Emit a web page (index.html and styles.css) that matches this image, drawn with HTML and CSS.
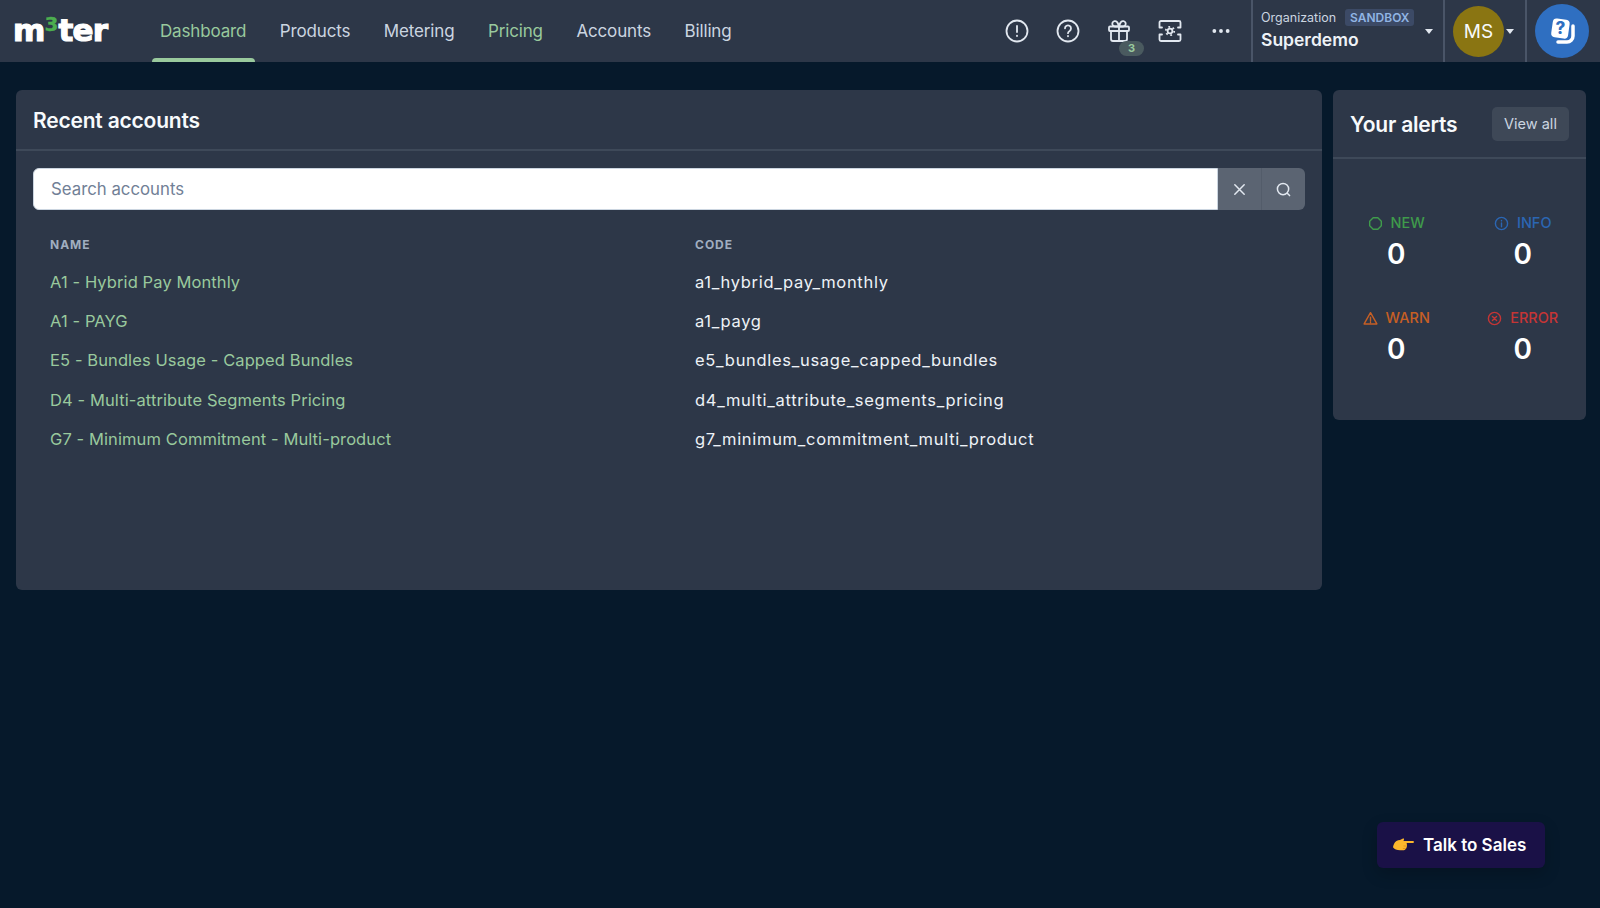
FILE: index.html
```html
<!DOCTYPE html>
<html lang="en">
<head>
<meta charset="utf-8">
<title>m3ter Dashboard</title>
<link rel="stylesheet" href="styles.css">
</head>
<body>
<header class="topbar">
  <div class="logo">m<span class="logo-three">3</span>ter</div>
  <nav class="nav">
    <a class="nav-item is-active">Dashboard</a>
    <a class="nav-item">Products</a>
    <a class="nav-item">Metering</a>
    <a class="nav-item is-green">Pricing</a>
    <a class="nav-item">Accounts</a>
    <a class="nav-item">Billing</a>
  </nav>
  <div class="tools">
    <button class="tool"><svg viewBox="0 0 24 24" class="tool-icon"><circle cx="12" cy="12" r="10.5"/><path d="M12 7v6M12 16.600v.4"/></svg></button>
    <button class="tool"><svg viewBox="0 0 24 24" class="tool-icon"><circle cx="12" cy="12" r="10.5"/><path d="M9 9.300a3 3 0 1 1 4.600 2.600c-1 .6-1.600 1.200-1.600 2.300M12 17v.3"/></svg></button>
    <button class="tool"><svg viewBox="0 0 24 24" class="tool-icon"><rect x="2" y="7.500" width="20" height="4.500" rx="1"/><path d="M4 12v8a2 2 0 0 0 2 2h12a2 2 0 0 0 2-2v-8M12 7.500V22M12 7.500H8a2.700 2.700 0 1 1 2-4.500c1 1 2 4.500 2 4.500s1-3.500 2-4.500a2.700 2.700 0 1 1 2 4.500z"/></svg><span class="tool-badge">3</span></button>
    <button class="tool"><svg viewBox="0 0 24 24" class="tool-icon"><path d="M1.500 8.500V3.500a1.500 1.500 0 0 1 1.500-1.500h18a1.500 1.500 0 0 1 1.500 1.500v5h-2.500M1.500 8.500H4M1.500 15.500v5a1.500 1.500 0 0 0 1.500 1.500h18a1.500 1.500 0 0 0 1.500-1.500v-5h-2.500M1.500 15.500H4"/><circle cx="12" cy="12" r="2.400"/><circle cx="12" cy="12" r="4.200" class="gear-teeth"/></svg></button>
    <button class="tool"><svg viewBox="0 0 24 24" class="tool-icon dots"><circle cx="4" cy="12" r="2.300"/><circle cx="12" cy="12" r="2.300"/><circle cx="20" cy="12" r="2.300"/></svg></button>
  </div>
  <div class="org">
    <div class="org-text">
      <div class="org-top"><span class="org-label">Organization</span><span class="org-tag">SANDBOX</span></div>
      <div class="org-name">Superdemo</div>
    </div>
    <span class="caret"></span>
  </div>
  <div class="user">
    <span class="avatar">MS</span>
    <span class="caret"></span>
  </div>
  <div class="help">
    <span class="help-circle">
      <svg viewBox="0 0 32 32" class="help-icon"><path class="help-back" d="M27 11v10a6 6 0 0 1-6 6h-9"/><rect class="help-front" x="6" y="4" width="17" height="19" rx="4" transform="rotate(8 14 13)"/><text class="help-q" x="14.500" y="19" text-anchor="middle">?</text></svg>
    </span>
  </div>
</header>

<main class="page">
  <section class="card accounts">
    <div class="card-head"><h2 class="card-title">Recent accounts</h2></div>
    <div class="card-body">
      <div class="search">
        <div class="search-input">Search accounts</div>
        <button class="search-btn"><svg viewBox="0 0 16 16" class="search-icon"><path d="M3 3l10 10M13 3L3 13"/></svg></button>
        <button class="search-btn search-last"><svg viewBox="0 0 16 16" class="search-icon"><circle cx="7.500" cy="7.500" r="6"/><path d="M12 12l2.500 2.500"/></svg></button>
      </div>
      <div class="table">
        <div class="th">NAME</div><div class="th">CODE</div>
        <a class="td link">A1 - Hybrid Pay Monthly</a><div class="td code">a1_hybrid_pay_monthly</div>
        <a class="td link">A1 - PAYG</a><div class="td code">a1_payg</div>
        <a class="td link">E5 - Bundles Usage - Capped Bundles</a><div class="td code">e5_bundles_usage_capped_bundles</div>
        <a class="td link">D4 - Multi-attribute Segments Pricing</a><div class="td code">d4_multi_attribute_segments_pricing</div>
        <a class="td link">G7 - Minimum Commitment - Multi-product</a><div class="td code">g7_minimum_commitment_multi_product</div>
      </div>
    </div>
  </section>

  <section class="card alerts">
    <div class="alerts-head">
      <h2 class="card-title">Your alerts</h2>
      <button class="view-all">View all</button>
    </div>
    <div class="alerts-grid">
      <div class="stat">
        <div class="stat-label c-new"><svg viewBox="0 0 16 16" class="stat-icon"><path d="M5.500 1.800h5l3.700 3.700v5l-3.700 3.700h-5l-3.700-3.700v-5z" stroke-linejoin="round"/></svg>NEW</div>
        <div class="stat-value">0</div>
      </div>
      <div class="stat">
        <div class="stat-label c-info"><svg viewBox="0 0 16 16" class="stat-icon"><circle cx="8" cy="8" r="6.500"/><path d="M8 7.500v4M8 4.800v.4"/></svg>INFO</div>
        <div class="stat-value">0</div>
      </div>
      <div class="stat">
        <div class="stat-label c-warn"><svg viewBox="0 0 16 16" class="stat-icon"><path d="M8 1.800l6.800 12H1.200zM8 6.500v4M8 11.800v.4" stroke-linejoin="round"/></svg>WARN</div>
        <div class="stat-value">0</div>
      </div>
      <div class="stat">
        <div class="stat-label c-error"><svg viewBox="0 0 16 16" class="stat-icon"><circle cx="8" cy="8" r="6.500"/><path d="M5.800 5.800l4.400 4.400M10.200 5.800l-4.400 4.400"/></svg>ERROR</div>
        <div class="stat-value">0</div>
      </div>
    </div>
  </section>
</main>

<button class="sales">
  <svg viewBox="0 0 22 16" class="sales-hand"><path fill="#fbb72c" d="M1 7c1-2.500 3.500-4 6-4l3-1.500c.8-.3 1.300.3 1 1L10.500 4H20c1.300 0 1.300 2 0 2h-6.500c.5.600.6 1.300.3 2 .4.700.3 1.500-.2 2 .1.800-.2 1.500-.9 1.800-.2.900-.9 1.400-1.800 1.400H7c-3 0-6-1.200-7-3 .2-1.200.5-2.200 1-3.200z"/><path fill="#e0931a" d="M10.500 8.500h3l.1 1h-3zM10 11h3l-.2 1h-3z"/></svg>
  <span>Talk to Sales</span>
</button>
</body>
</html>
```
FILE: styles.css
```css
* { box-sizing: border-box; }
html, body { height: 100%; }
body {
  margin: 0;
  height: 908px;
  overflow: hidden;
  background: #06192b;
  color: #fff;
  font-family: "Inter", "Noto Sans", sans-serif;
  position: relative;
}
button { font: inherit; border: 0; background: none; color: inherit; padding: 0; }

.topbar {
  height: 62px;
  background: #2d3748;
  display: flex;
  align-items: stretch;
}
.logo {
  width: 144px;
  padding: 12px 0 0 13px;
  font-family: "DejaVu Sans", sans-serif;
  font-weight: 700;
  font-size: 31px;
  line-height: 36px;
  letter-spacing: -.8px;
  color: #fff;
  -webkit-text-stroke: 1.2px #fff;
  white-space: nowrap;
}
.logo-three {
  display: inline-block;
  width: 14px;
  text-align: center;
  font-size: 20px;
  line-height: 0;
  color: #4cae4f;
  -webkit-text-stroke: .3px #4cae4f;
  vertical-align: 10px;
  letter-spacing: 0;
}
.nav { display: flex; gap: 16.500px; flex: 1; padding-left: 7.500px; }
.nav-item {
  display: flex;
  align-items: center;
  padding: 0 8.500px;
  height: 62px;
  font-size: 17px;
  letter-spacing: -.15px;
  color: #cbd5e0;
  position: relative;
}
.is-active, .is-green { color: #99c99d; }
.is-active::after {
  content: "";
  position: absolute;
  left: 0; right: 0; bottom: 0;
  height: 4px;
  background: #99c99d;
  border-radius: 4px 4px 0 0;
}
.tools { display: flex; align-items: center; margin-right: 5px; }
.tool {
  width: 51px;
  height: 62px;
  display: flex;
  align-items: center;
  justify-content: center;
  position: relative;
}
.tool-icon {
  width: 24px;
  height: 24px;
  fill: none;
  stroke: #e2e8f0;
  stroke-width: 1.800;
  stroke-linecap: round;
  stroke-linejoin: round;
}
.gear-teeth { stroke-width: 1.800; stroke-linecap: butt; stroke-dasharray: 1.800 2.600; }
.dots { fill: #e2e8f0; stroke: none; width: 20px; height: 20px; }
.tool-badge {
  position: absolute;
  left: 26px;
  top: 41px;
  width: 25px;
  height: 15px;
  border-radius: 8px;
  background: #4a5a5f;
  color: #99c99d;
  font-size: 11px;
  font-weight: 700;
  line-height: 15px;
  text-align: center;
}
.org {
  width: 194px;
  border-left: 2px solid #4a5568;
  border-right: 2px solid #4a5568;
  display: flex;
  align-items: center;
  padding: 0 10px 4px 8px;
}
.org-text { flex: 1; }
.org-top { display: flex; align-items: center; gap: 9px; height: 17px; margin-bottom: 4px; }
.org-label { font-size: 12.500px; color: #cbd5e0; }
.org-tag {
  font-size: 12px;
  font-weight: 600;
  line-height: 17px;
  padding: 0 5px;
  background: #3c4a66;
  color: #90b4e4;
  border-radius: 3px;
}
.org-name { font-size: 17.500px; font-weight: 600; line-height: 20px; color: #edf2f7; }
.caret {
  width: 0;
  height: 0;
  border-left: 4.500px solid transparent;
  border-right: 4.500px solid transparent;
  border-top: 5px solid #e2e8f0;
}
.org .caret { margin-top: 4px; }
.user {
  width: 82px;
  border-right: 2px solid #4a5568;
  display: flex;
  align-items: center;
  padding-left: 8px;
  gap: 2px;
}
.avatar {
  width: 51px;
  height: 51px;
  border-radius: 50%;
  background: #8a7512;
  display: flex;
  align-items: center;
  justify-content: center;
  font-size: 19px;
  color: #f7fafc;
}
.help { width: 73px; display: flex; align-items: center; padding-left: 8px; }
.help-circle {
  width: 54px;
  height: 54px;
  border-radius: 50%;
  background: #2f6fc1;
  display: flex;
  align-items: center;
  justify-content: center;
}
.help-icon { width: 32px; height: 32px; }
.help-back { fill: none; stroke: #fff; stroke-width: 3.500; stroke-linecap: round; }
.help-front { fill: #fff; }
.help-q { fill: #2f6fc1; font-size: 17px; font-weight: 800; font-family: "Inter", sans-serif; }

.page {
  display: flex;
  align-items: flex-start;
  gap: 11px;
  padding: 28px 14px 0 16px;
}
.card { background: #2d3748; border-radius: 6px; }
.accounts { width: 1306px; height: 500px; }
.alerts { width: 253px; height: 330px; }
.card-head {
  height: 61px;
  padding: 0 17px 0;
  display: flex;
  align-items: center;
  border-bottom: 2px solid #3e4959;
}
.card-title { margin: 2px 0 0; font-size: 21px; font-weight: 600; letter-spacing: -.2px; color: #f7fafc; }
.card-body { padding: 17px 17px 0; }
.search { display: flex; height: 42px; }
.search-input {
  flex: 1;
  background: #fff;
  border: 1px solid #cbd5e0;
  border-radius: 6px 0 0 6px;
  padding-left: 17px;
  display: flex;
  align-items: center;
  font-size: 16.800px;
  color: #718096;
}
.search-btn {
  width: 43px;
  background: #5b6472;
  display: flex;
  align-items: center;
  justify-content: center;
}
.search-last { border-left: 1px solid #535c6a; border-radius: 0 6px 6px 0; width: 44px; }
.search-icon { width: 15px; height: 15px; fill: none; stroke: #e2e8f0; stroke-width: 1.600; stroke-linecap: round; }

.table {
  display: grid;
  grid-template-columns: 645px 1fr;
  grid-template-rows: 35px;
  grid-auto-rows: 39.400px;
  padding-left: 17px;
  margin-top: 17px;
}
.th {
  font-size: 12px;
  font-weight: 700;
  letter-spacing: 1px;
  color: #a0aec0;
  display: flex;
  align-items: center;
}
.td {
  font-size: 16.500px;
  letter-spacing: .1px;
  color: #edf2f7;
  display: flex;
  align-items: center;
}
.code { letter-spacing: .7px; }
.link { color: #99c99d; }

.alerts-head {
  height: 69px;
  padding: 0 17px;
  display: flex;
  align-items: center;
  justify-content: space-between;
  border-bottom: 2px solid #3e4959;
}
.view-all {
  width: 77px;
  height: 34px;
  border-radius: 5px;
  background: #3e4857;
  font-size: 14.500px;
  color: #cbd5e0;
}
.alerts-grid {
  display: grid;
  grid-template-columns: 1fr 1fr;
  grid-auto-rows: 95px;
  padding: 54px 0 0;
}
.stat { text-align: center; }
.stat-label {
  display: flex;
  align-items: center;
  justify-content: center;
  gap: 8px;
  font-size: 14.500px;
  font-weight: 500;
  line-height: 20px;
}
.stat-icon { width: 15px; height: 15px; fill: none; stroke: currentColor; stroke-width: 1.500; stroke-linecap: round; }
.stat-value { font-size: 28px; font-weight: 600; line-height: 34px; margin-top: 4px; color: #fff; }
.c-new { color: #3f9b4b; }
.c-info { color: #2b66b3; }
.c-warn { color: #c65f24; }
.c-error { color: #c53535; }

.sales {
  position: absolute;
  left: 1377px;
  top: 822px;
  width: 168px;
  height: 46px;
  border-radius: 6px;
  background: #1a1147;
  display: flex;
  align-items: center;
  gap: 8px;
  padding-left: 16px;
  font-family: "Inter", sans-serif;
  font-weight: 600;
  font-size: 17px;
  color: #fff;
  box-shadow: 0 6px 16px rgba(0,0,0,.2);
}
.sales-hand { width: 22px; height: 16px; }
```
